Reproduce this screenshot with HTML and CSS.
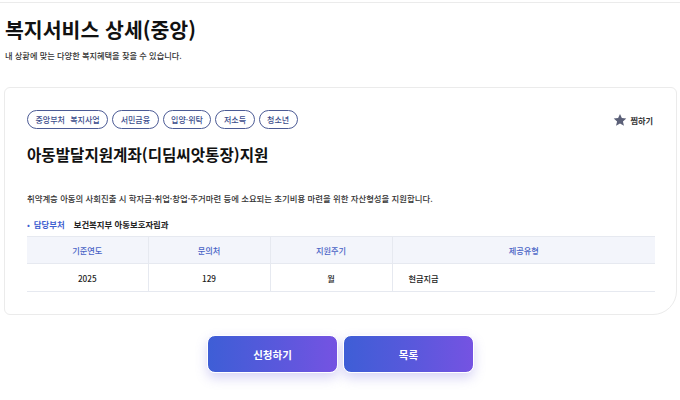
FILE: index.html
```html
<!DOCTYPE html>
<html lang="ko">
<head>
<meta charset="utf-8">
<link rel="stylesheet" href="styles.css">
</head>
<body>
<div class="topline"></div>
<div class="page">
  <header class="head">
    <h1 class="title">복지서비스 상세(중앙)</h1>
    <p class="subtitle">내 상황에 맞는 다양한 복지혜택을 찾을 수 있습니다.</p>
  </header>
  <section class="card">
    <div class="tagrow">
      <ul class="tags">
        <li class="tag">중앙부처 복지사업</li>
        <li class="tag">서민금융</li>
        <li class="tag">입양·위탁</li>
        <li class="tag">저소득</li>
        <li class="tag">청소년</li>
      </ul>
      <button class="fav">
        <svg class="star" viewBox="0 0 24 24" width="14" height="14"><path d="M12 1.5l3.2 7.1 7.6.7-5.8 5.1 1.8 7.6L12 18l-6.8 4 1.8-7.6L1.2 9.3l7.6-.7z" fill="#5b6078"/></svg>
        <span>찜하기</span>
      </button>
    </div>
    <h2 class="name">아동발달지원계좌(디딤씨앗통장)지원</h2>
    <p class="desc">취약계층 아동의 사회진출 시 학자금·취업·창업·주거마련 등에 소요되는 초기비용 마련을 위한 자산형성을 지원합니다.</p>
    <p class="dept"><span class="dot">•</span><span class="dlabel">담당부처</span><span class="dval">보건복지부 아동보호자립과</span></p>
    <table class="info">
      <thead>
        <tr><th class="c1">기준연도</th><th class="c2">문의처</th><th class="c3">지원주기</th><th class="c4">제공유형</th></tr>
      </thead>
      <tbody>
        <tr><td>2025</td><td>129</td><td>월</td><td class="left">현금지급</td></tr>
      </tbody>
    </table>
  </section>
  <div class="actions">
    <button class="btn">신청하기</button>
    <button class="btn">목록</button>
  </div>
</div>
</body>
</html>
```

FILE: styles.css
```css
* { box-sizing: border-box; }
html, body { margin: 0; padding: 0; background: #fff; }
body {
  font-family: "Noto Sans CJK KR", "Noto Sans", sans-serif;
  color: #222;
  width: 680px;
  height: 400px;
  overflow: hidden;
}
.topline {
  height: 3px;
  border-bottom: 1px solid #ebebeb;
}
.page {
  padding: 0 3px 0 4px;
}
.head { padding: 11px 1px 0; }
.title {
  margin: 0;
  font-size: 20.5px;
  font-weight: 700;
  line-height: 30px;
  color: #111;
}
.subtitle {
  margin: 5px 0 0;
  font-size: 8.2px;
  font-weight: 500;
  line-height: 12px;
  color: #333;
}
.card {
  margin-top: 26px;
  border: 1px solid #ebebeb;
  border-radius: 6px 6px 24px 6px;
  padding: 22px 22px 22px 22px;
  height: 228px;
}
.tagrow {
  display: flex;
  justify-content: space-between;
  align-items: center;
}
.tags {
  list-style: none;
  margin: 0;
  padding: 0;
  display: flex;
  gap: 4px;
}
.tag {
  height: 19px;
  border: 1px solid #4c5b95;
  border-radius: 10px;
  padding: 0 7.5px;
  font-size: 8px;
  font-weight: 500;
  line-height: 17px;
  color: #3b4c8c;
  white-space: nowrap;
  word-spacing: 3px;
}
.fav {
  display: flex;
  align-items: center;
  gap: 3px;
  border: 0;
  background: none;
  padding: 0;
  font-family: inherit;
  font-size: 8.2px;
  font-weight: 700;
  color: #333;
  margin-right: 1px;
}
.star { display: block; }
.name {
  margin: 14px 0 0;
  font-size: 15.6px;
  font-weight: 700;
  line-height: 22px;
  color: #111;
}
.desc {
  margin: 27px 0 0;
  font-size: 8.4px;
  font-weight: 500;
  line-height: 12px;
  color: #333;
}
.dept {
  margin: 14px 0 0;
  font-size: 8.4px;
  line-height: 12px;
  display: flex;
  align-items: center;
}
.dot { color: #3f5fd0; margin-right: 4px; }
.dlabel { color: #3f5fd0; font-weight: 700; margin-right: 9px; }
.dval { color: #222; font-weight: 700; }
.info {
  margin-top: 6px;
  width: 628px;
  border-collapse: collapse;
  font-size: 8.2px;
}
.info th {
  background: #f3f5fb;
  color: #4a64c6;
  font-weight: 500;
  height: 27px;
  border-top: 1px solid #e6e9f0;
  border-bottom: 1px solid #e6e9f0;
}
.info td {
  height: 28px;
  text-align: center;
  font-weight: 500;
  color: #222;
  border-bottom: 1px solid #e6e9f0;
}
.info th + th, .info td + td { border-left: 1px solid #e6e9f0; }
.info .c1 { width: 121px; }
.info .c2 { width: 122px; }
.info .c3 { width: 122px; }
.info td.left { text-align: left; padding-left: 16px; }
.actions {
  display: flex;
  justify-content: center;
  gap: 5px;
  margin-top: 20px;
}
.btn {
  width: 131px;
  height: 38px;
  border: 1.5px solid #fff;
  border-radius: 8px;
  background: linear-gradient(90deg, #3e5ed6 0%, #5a58dc 55%, #7553e2 100%);
  color: #fff;
  font-family: inherit;
  font-size: 10.5px;
  font-weight: 700;
  box-shadow: 0 5px 12px rgba(110, 100, 220, 0.28);
}
```
